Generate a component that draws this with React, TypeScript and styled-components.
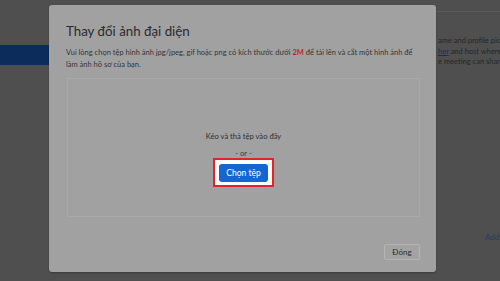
import React from "react";
import styled, { createGlobalStyle } from "styled-components";

const GlobalStyle = createGlobalStyle`
  html, body {
    margin: 0;
    padding: 0;
    width: 500px;
    height: 281px;
    overflow: hidden;
    background: #4f4f4f;
    font-family: Lato, "Noto Sans", sans-serif;
  }
  * {
    box-sizing: border-box;
  }
`;

const Page = styled.div`
  position: relative;
  display: flex;
  width: 500px;
  height: 281px;
  background: #4f4f4f;
`;

const Sidebar = styled.div`
  width: 49px;
  display: flex;
  flex-direction: column;
  padding-top: 45px;
`;

const NavItem = styled.div<{ $active?: boolean }>`
  height: 20px;
  background: ${(p) => (p.$active ? "#0c2c5c" : "transparent")};
`;

const Main = styled.div`
  flex: 1;
  display: flex;
  flex-direction: column;
`;

const TopBar = styled.div`
  height: 12px;
  border-bottom: 1px solid #5a5a5a;
`;

const Content = styled.div`
  flex: 1;
  display: flex;
  justify-content: flex-end;
`;

const SideInfo = styled.div`
  width: 63px;
  display: flex;
  flex-direction: column;
  padding: 24px 0 0 1px;
  overflow: hidden;
  white-space: nowrap;
`;

const InfoText = styled.p`
  margin: 0;
  font-size: 7.5px;
  line-height: 10.5px;
  color: #262626;
`;

const Link = styled.span`
  color: #1b2e52;
  text-decoration: underline;
`;

const AddLink = styled.p`
  margin: 164px 0 0 47px;
  font-size: 8px;
  line-height: 11px;
  color: #263a66;
`;

const Modal = styled.div`
  position: absolute;
  left: 49px;
  top: 5px;
  width: 387px;
  height: 267px;
  background: #a1a1a1;
  border-radius: 3px;
  box-shadow: 0 1px 2px rgba(0, 0, 0, 0.25);
  display: flex;
  flex-direction: column;
  padding: 0 16px 0 17px;
`;

const Title = styled.h2`
  margin: 18px 0 0;
  font-size: 13.3px;
  line-height: 16px;
  font-weight: 400;
  color: #2a2a2a;
`;

const Description = styled.p`
  margin: 8px 0 0;
  max-width: 354px;
  font-size: 7.5px;
  line-height: 12px;
  color: #353535;
`;

const Limit = styled.b`
  color: #c31f1f;
`;

const DropZone = styled.div`
  margin: 7px 0 0 1px;
  height: 139px;
  border: 1px solid #a9a9a9;
  display: flex;
  flex-direction: column;
  align-items: center;
  padding-top: 52px;
`;

const DropHint = styled.p`
  margin: 0;
  font-size: 7.6px;
  line-height: 11px;
  color: #2f2f2f;
`;

const OrText = styled.p`
  margin: 6px 0 0;
  font-size: 7.6px;
  line-height: 11px;
  color: #3a3a3a;
`;

const Highlight = styled.span`
  margin-top: -1px;
  display: inline-flex;
  padding: 4px 4px 3px;
  border: 2px solid #e3232b;
  background: #ffffff;
`;

const PrimaryButton = styled.button`
  width: 49px;
  height: 18px;
  border: none;
  border-radius: 3px;
  background: #1566d2;
  color: #ffffff;
  font-family: inherit;
  font-size: 8.5px;
  padding: 0;
`;

const Footer = styled.div`
  display: flex;
  justify-content: flex-end;
  margin-top: 27px;
`;

const SecondaryButton = styled.button`
  width: 36px;
  height: 16px;
  border: 1px solid #b4b4b4;
  border-radius: 2px;
  background: #a3a3a3;
  color: #2c2c2c;
  font-family: inherit;
  font-size: 8px;
  padding: 0;
`;

const App: React.FC = () => {
  return (
    <>
      <GlobalStyle />
      <Page>
        <Sidebar>
          <NavItem $active />
        </Sidebar>
        <Main>
          <TopBar />
          <Content>
            <SideInfo>
              <InfoText>ame and profile pic</InfoText>
              <InfoText>
                <Link>her</Link> and host where
              </InfoText>
              <InfoText>e meeting can shar</InfoText>
              <AddLink>Add</AddLink>
            </SideInfo>
          </Content>
        </Main>
        <Modal>
          <Title>Thay đổi ảnh đại diện</Title>
          <Description>
            Vui lòng chọn tệp hình ảnh jpg/jpeg, gif hoặc png có kích thước dưới{" "}
            <Limit>2M</Limit> để tải lên và cắt một hình ảnh để làm ảnh hồ sơ
            của bạn.
          </Description>
          <DropZone>
            <DropHint>Kéo và thả tệp vào đây</DropHint>
            <OrText>- or -</OrText>
            <Highlight>
              <PrimaryButton>Chọn tệp</PrimaryButton>
            </Highlight>
          </DropZone>
          <Footer>
            <SecondaryButton>Đóng</SecondaryButton>
          </Footer>
        </Modal>
      </Page>
    </>
  );
};

export default App;
